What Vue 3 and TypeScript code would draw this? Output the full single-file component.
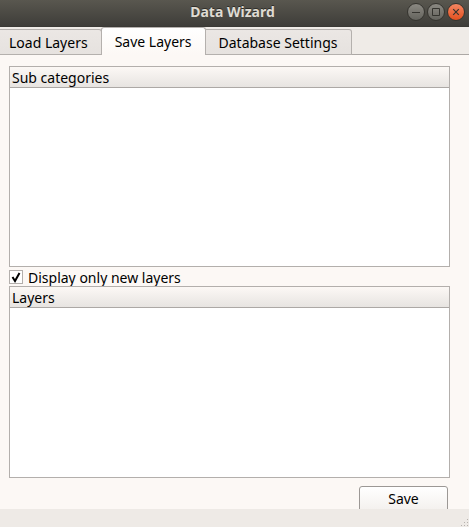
<script setup lang="ts">
import { ref } from 'vue'

const tabs: string[] = ['Load Layers', 'Save Layers', 'Database Settings']
const activeTab = ref<string>('Save Layers')
const onlyNew = ref<boolean>(true)
</script>

<template>
  <div class="window">
    <header class="titlebar">
      <h1 class="title">Data Wizard</h1>
      <div class="controls">
        <button class="control" type="button" aria-label="Minimize">
          <svg viewBox="0 0 18 18"><path d="M5 9.5h8" /></svg>
        </button>
        <button class="control" type="button" aria-label="Maximize">
          <svg viewBox="0 0 18 18"><path d="M5.5 5.5h7v7h-7z" /></svg>
        </button>
        <button class="control close" type="button" aria-label="Close">
          <svg viewBox="0 0 18 18"><path d="M6.2 6.2l5.6 5.6M11.8 6.2l-5.6 5.6" /></svg>
        </button>
      </div>
    </header>

    <nav class="tabs" role="tablist">
      <button
        v-for="tab in tabs"
        :key="tab"
        class="tab"
        :class="{ active: tab === activeTab }"
        type="button"
        role="tab"
        :aria-selected="tab === activeTab"
        @click="activeTab = tab"
      >{{ tab }}</button>
    </nav>

    <main class="panel">
      <div class="list categories">
        <table>
          <thead><tr><th scope="col">Sub categories</th></tr></thead>
        </table>
      </div>
      <label class="check">
        <span class="box">
          <input v-model="onlyNew" type="checkbox" />
          <svg v-if="onlyNew" viewBox="0 0 14 14"><path d="M3.5 7l2.5 4 4.5-8" /></svg>
        </span>
        <span class="caption">Display only new layers</span>
      </label>
      <div class="list layers">
        <table>
          <thead><tr><th scope="col">Layers</th></tr></thead>
        </table>
      </div>
      <div class="actions">
        <button class="save" type="button">Save</button>
      </div>
    </main>

    <footer class="status">
      <svg class="grip" viewBox="0 0 9 9">
        <path d="M7 1h1v1h-1zM4 4h1v1h-1zM7 4h1v1h-1zM1 7h1v1h-1zM4 7h1v1h-1zM7 7h1v1h-1z" />
      </svg>
    </footer>
  </div>
</template>

<style>
body {
  margin: 0;
}
</style>

<style scoped>
* {
  box-sizing: border-box;
}

.window {
  display: flex;
  flex-direction: column;
  height: 100vh;
  overflow: hidden;
  background: #fcf8f5;
  color: #000;
  font-family: "Noto Sans", "Open Sans", sans-serif;
  font-size: 14px;
  line-height: 20px;
}

button {
  margin: 0;
  font: inherit;
  color: inherit;
}

.titlebar {
  display: grid;
  grid-template-columns: 1fr auto 1fr;
  align-items: center;
  flex: none;
  height: 27px;
  padding: 0 4px 3px 0;
  background: linear-gradient(#59574f, #3e3d39);
  border-bottom: 1px solid #3a3935;
}

.title {
  grid-column: 2;
  margin: 0;
  font-size: 14px;
  line-height: 20px;
  font-weight: 700;
  color: #dfdbd2;
  text-shadow: 0 -1px #2e2d29;
}

.controls {
  display: flex;
  justify-content: flex-end;
  gap: 2px;
}

.control {
  width: 18px;
  height: 18px;
  padding: 0;
  border: 1px solid #35342f;
  border-radius: 50%;
  background: linear-gradient(#8b8982, #64635d);
}

.control.close {
  background: linear-gradient(#f58662, #e2501f);
}

.control svg {
  display: block;
  width: 18px;
  height: 18px;
  margin: -1px;
  fill: none;
  stroke: #35342f;
  stroke-width: 1;
}

.control.close svg {
  stroke-width: 1.2;
}

.tabs {
  display: flex;
  align-items: flex-end;
  flex: none;
  height: 28px;
  background: #efebe7;
  box-shadow: inset 0 -1px #aca8a5;
}

.tab {
  height: 26px;
  padding: 2px 13px 0;
  border: 1px solid #b4b0ad;
  border-left: 0;
  border-radius: 0 3px 0 0;
  background: linear-gradient(#ebe7e4, #e6e2df);
  white-space: nowrap;
}

.tab:first-child {
  padding-left: 9px;
}

.tab.active {
  height: 28px;
  margin-left: -1px;
  border-left: 1px solid #b4b0ad;
  border-bottom: 0;
  padding: 0 13px;
  border-radius: 3px 3px 0 0;
  background: linear-gradient(#fff, #fcf8f5);
}

.panel {
  display: flex;
  flex-direction: column;
  flex: 1;
  min-height: 0;
  padding: 11px 19px 0 9px;
}

.list {
  min-height: 0;
  border: 1px solid #b3afac;
  background: #fff;
}

.categories {
  flex: 201 1 0;
}

.layers {
  flex: 192 1 0;
}

.list table {
  width: 100%;
  border-spacing: 0;
}

.list th {
  height: 21px;
  padding: 2px 2px 0;
  border-bottom: 1px solid #aca8a5;
  background: linear-gradient(#fcf8f5, #e7e4e1);
  font-weight: 400;
  line-height: 18px;
  text-align: left;
}

.check {
  display: flex;
  align-items: center;
  flex: none;
  gap: 5px;
  height: 19px;
  padding-top: 1px;
}

.caption {
  padding-top: 2px;
}

.box {
  display: grid;
  width: 14px;
  height: 14px;
}

.box input,
.box svg {
  grid-area: 1 / 1;
  width: 14px;
  height: 14px;
  margin: 0;
}

.box input {
  appearance: none;
  border: 1px solid #b3afac;
  background: #fff;
}

.box svg {
  fill: none;
  stroke: #000;
  stroke-width: 2;
  pointer-events: none;
}

.actions {
  display: flex;
  justify-content: flex-end;
  flex: none;
  height: 31px;
  padding: 8px 2px 0 0;
  overflow: hidden;
}

.save {
  width: 89px;
  height: 26px;
  padding: 0 0 1px;
  border: 1px solid #9c9895;
  border-radius: 3px;
  background: linear-gradient(#fff, #f3f0ed);
}

.status {
  display: flex;
  justify-content: flex-end;
  align-items: flex-end;
  flex: none;
  height: 18px;
  background: #eeeae6;
}

.grip {
  width: 9px;
  height: 9px;
  fill: #b5b1ad;
}
</style>
